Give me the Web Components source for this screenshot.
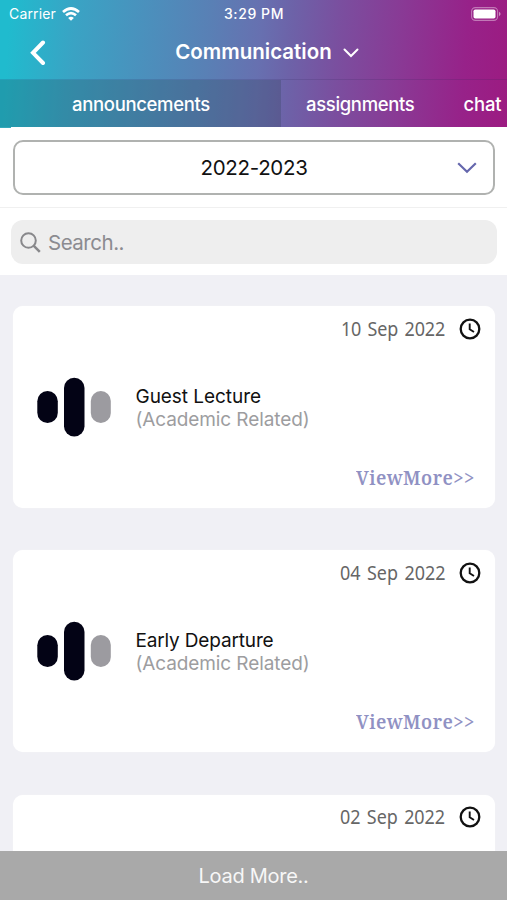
<!DOCTYPE html>
<html lang="en"><head><meta charset="utf-8"><title>Communication</title>
<style>html,body{margin:0;height:100%;overflow:hidden}body{font-family:Inter,"Liberation Sans",sans-serif;background:#f0f0f5}</style></head>
<body><communication-page></communication-page>
<script>
const define=(name,html,setup)=>customElements.define(name,class extends HTMLElement{
  constructor(){super();this.attachShadow({mode:'open'}).innerHTML=html;}
  connectedCallback(){if(setup)setup(this);}
});

/* A single-line label whose tracking adapts to a given width; "squeeze" condenses its glyphs. */
define('fit-label','<style>:host{display:block;white-space:nowrap;flex:none}span{display:inline-block;transform-origin:0 50%}</style><span><slot></slot></span>',el=>{
  const s=el.shadowRoot.querySelector('span'),w=+el.getAttribute('width'),k=+(el.getAttribute('squeeze')||1);
  const n=el.textContent.length;
  if(!w||!n)return;
  el.style.width=w+'px';
  s.style.letterSpacing=((w/k-s.getBoundingClientRect().width)/n)+'px';
  if(k!==1)s.style.transform=`scaleX(${k})`;
});

define('status-bar',`<style>
:host{display:grid;grid-template-columns:1fr auto 1fr;height:27px;align-items:center;padding:0 6px 0 9px;box-sizing:border-box;font-size:14px;font-weight:500}
div{display:flex;align-items:center;gap:6px}.r{justify-content:flex-end}svg{display:block}.c{font-weight:400}.time{margin-right:2px}
</style><div class="c"><fit-label width="47">Carrier</fit-label>
<svg width="18" height="14" viewBox="0 0 18 14" fill="none" stroke="#fff" stroke-width="2.7"><path d="M1 5Q9-2 17 5"/><path d="M4 8.3Q9 4 14 8.3"/><path d="M9 13.8L6.1 10.9Q9 8.5 11.9 10.9Z" fill="#fff" stroke="none"/></svg></div>
<fit-label class="time" width="60">3:29 PM</fit-label>
<div class="r"><svg width="30" height="14" viewBox="0 0 30 14"><rect x=".6" y=".6" width="26" height="12.8" rx="3.8" fill="none" stroke="#fff" stroke-opacity=".4" stroke-width="1.1"/><rect x="2.5" y="2.5" width="22" height="9" rx="1.8" fill="#fff"/><path d="M28 4.8Q31.2 7 28 9.2Z" fill="#fff" fill-opacity=".5"/></svg></div>`);

define('nav-bar',`<style>
:host{display:grid;grid-template-columns:1fr auto 1fr;height:52px;align-items:center;box-sizing:border-box}
svg{display:block}.b{margin-left:29px}.t{font-size:20.5px;font-weight:600;line-height:24px;padding-bottom:2px}.d{margin-left:11px}
</style><svg class="b" width="18" height="26" viewBox="0 0 18 26" fill="none" stroke="#fff" stroke-width="4" stroke-linecap="round"><path d="M14 2.5L4 12.8L14 23"/></svg>
<fit-label class="t" width="156.5">Communication</fit-label>
<svg class="d" width="16" height="10" viewBox="0 0 16 10" fill="none" stroke="#fff" stroke-width="2" stroke-linecap="round"><path d="M1.5 1.5L8 8L14.5 1.5"/></svg>`);

define('tab-strip',`<style>
:host{display:flex;height:48px;box-sizing:border-box;border-top:1px solid rgba(50,35,90,.17);font-size:18.5px;font-weight:500}
div{display:flex;align-items:center;flex:none}.a{width:281px;box-sizing:border-box;padding-left:72px;background:rgba(35,55,70,.23)}.b{margin-left:25px}.c{margin-left:49px}
</style><div class="a"><fit-label width="138">announcements</fit-label></div><div class="b"><fit-label width="108.5">assignments</fit-label></div><div class="c"><fit-label width="38">chat</fit-label></div>`);

define('year-picker',`<style>
:host{display:flex;height:55px;box-sizing:border-box;border:2px solid #b0b2b0;border-radius:10px;margin:13px 12px 13px 13px;align-items:center;padding-left:185.5px;padding-right:16px;justify-content:space-between;font-size:20.5px;color:#111;background:#fff}
svg{display:block}
</style><fit-label width="107">2022-2023</fit-label><svg width="20" height="12" viewBox="0 0 20 12" fill="none" stroke="#6567ad" stroke-width="2.2"><path d="M1.2 1.2L10 9.7L18.8 1.2"/></svg>`);

define('search-field',`<style>
:host{display:flex;height:44px;align-items:center;gap:7px;background:#eee;border-radius:12px;margin:12px 10px 0 11px;padding-left:9px;color:#8b8b90;font-size:20.5px}
svg{display:block}
</style><svg width="21" height="21" viewBox="0 0 21 21" fill="none" stroke="#88888b" stroke-width="2"><circle cx="8.5" cy="8.5" r="7.3"/><path d="M13.6 13.6L19.8 19.8" stroke-width="2.5"/></svg><fit-label width="76">Search..</fit-label>`);

define('notice-card',`<style>
:host{display:flex;flex-direction:column;height:202px;flex:none;box-sizing:border-box;background:#fff;border-radius:10px;padding:0 14px 0 24px;box-shadow:0 0 1px rgba(255,255,255,.9)}
.top{display:flex;justify-content:flex-end;align-items:center;gap:14px;height:45px}.date{font:19.5px/26px "Noto Sans",sans-serif;word-spacing:2px;color:#666}
.mid{display:flex;align-items:center;height:60px;padding-top:26px;gap:24.5px}
.words{padding-top:2px}.title{font-size:19px;line-height:23px;color:#111}.sub{font-size:19px;line-height:23px;color:#9d9d9f}
.more{margin:25px 6px 0 auto;font:600 19.5px/32px "Noto Serif","DejaVu Serif",serif;color:#9091c3}
svg{display:block;flex:none}
</style><div class="top"><fit-label class="date"></fit-label><svg width="22" height="22" viewBox="0 0 22 22" fill="none" stroke="#111" stroke-width="2.3"><circle cx="11" cy="11" r="9.3"/><path d="M10.7 5.4V11.3L15 14" stroke-width="1.9"/></svg></div>
<div class="mid"><svg width="74" height="60" viewBox="0 0 74 60"><rect x=".3" y="14" width="20.5" height="32" rx="10.25" fill="#030315"/><rect x="27" y=".7" width="20.5" height="58.8" rx="10.25" fill="#030315"/><rect x="53.8" y="14" width="20" height="32" rx="10" fill="#9c9ba0"/></svg>
<div class="words"><fit-label class="title"></fit-label><fit-label class="sub" width="174">(Academic Related)</fit-label></div></div>
<fit-label class="more" width="119" squeeze=".95">ViewMore&gt;&gt;</fit-label>`,el=>{
  const q=s=>el.shadowRoot.querySelector(s);
  if(!el.hasAttribute('heading')){q('.mid').remove();q('.more').remove();}
  for(const [s,k,z] of [['.date','date','.92'],['.title','heading','1']]){
    const o=q(s);if(!o)continue;
    const n=document.createElement('fit-label');
    n.className=o.className;n.textContent=el.getAttribute(k);n.setAttribute('width',el.getAttribute(k+'-width'));n.setAttribute('squeeze',z);o.replaceWith(n);
  }
});

define('load-more',`<style>:host{display:flex;height:49px;flex:none;align-items:center;justify-content:center;background:#a9a9a9;color:#f7f7f7;font-size:20px}fit-label{padding-top:1px}</style><fit-label width="110">Load More..</fit-label>`);

define('communication-page',`<style>
:host{display:flex;flex-direction:column;height:900px;width:507px;overflow:hidden}
header{height:127px;flex:none;color:#fff;background:linear-gradient(94deg,#20bbce 2%,#3aa3c4 15%,#4a91bd 28%,#5980b5 41%,#6770b0 51%,#6d62a8 57%,#7a4f9f 66%,#893a95 78%,#972289 91%,#9c1b81)}
.filter{height:81px;flex:none;background:linear-gradient(#35a9ba,#35a9ba) 0 0/11px 1px no-repeat #fff;box-sizing:border-box;border-bottom:1px solid #f0f0f0;display:flow-root}
.search{height:67px;flex:none;background:#fff;display:flow-root}
main{flex:1;min-height:0;overflow:hidden;display:flex;flex-direction:column;gap:42.4px;padding:31px 12px 0 13px;background:#f0f0f5}
</style><header><status-bar></status-bar><nav-bar></nav-bar><tab-strip></tab-strip></header>
<div class="filter"><year-picker></year-picker></div><div class="search"><search-field></search-field></div>
<main><notice-card date="10 Sep 2022" date-width="104" heading="Guest Lecture" heading-width="125.5"></notice-card><notice-card date="04 Sep 2022" date-width="105.5" heading="Early Departure" heading-width="138"></notice-card><notice-card date="02 Sep 2022" date-width="105"></notice-card></main><load-more></load-more>`);
</script></body></html>
